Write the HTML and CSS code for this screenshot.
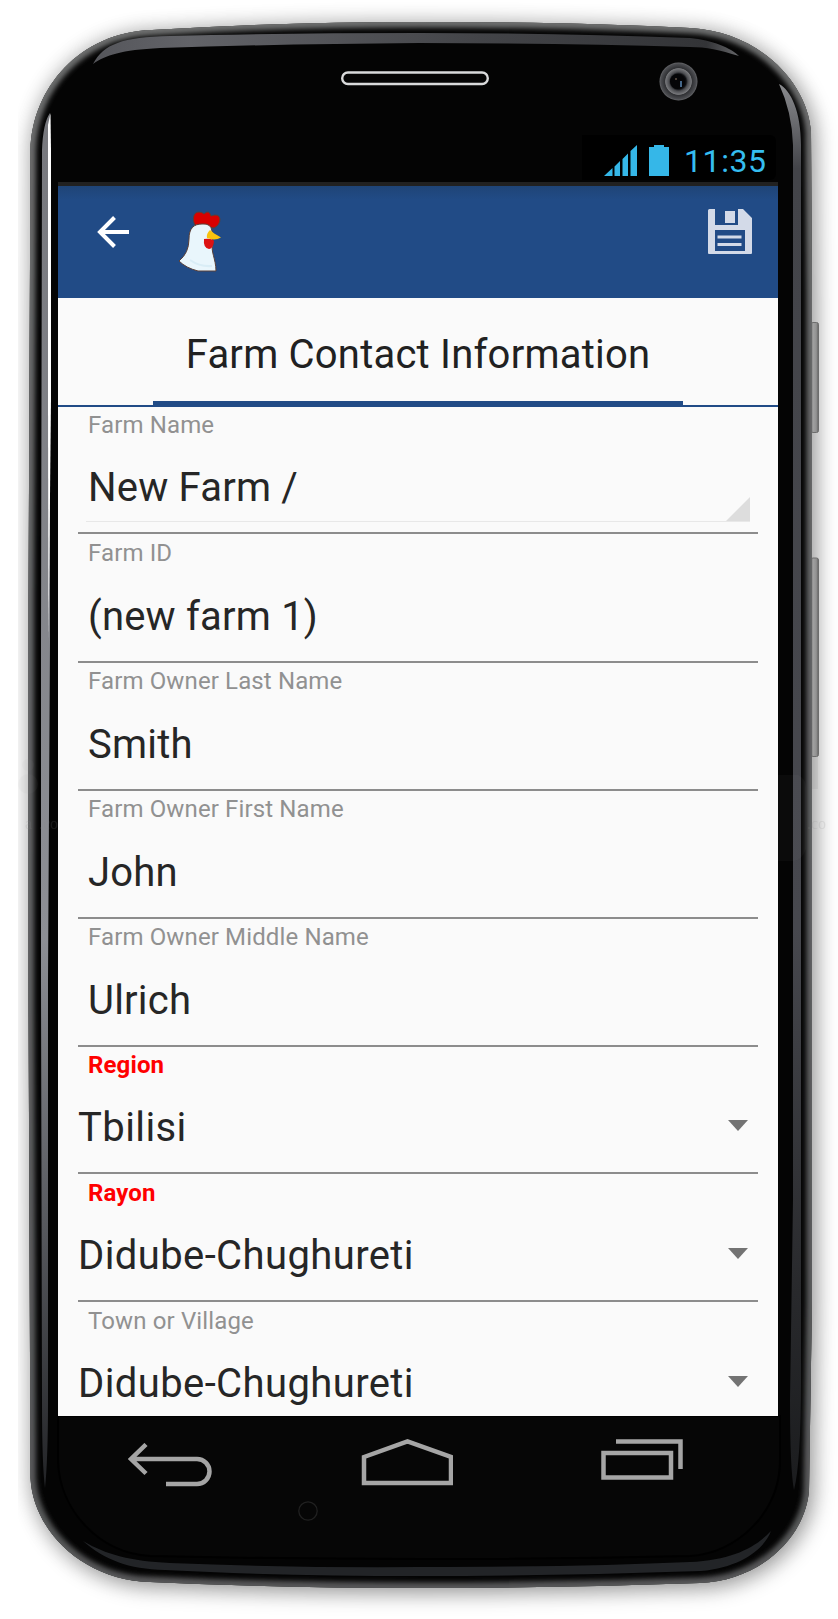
FILE: index.html
```html
<!DOCTYPE html>
<html lang="en">
<head>
<meta charset="utf-8">
<title>Farm Contact Information</title>
<link rel="stylesheet" href="styles.css">
</head>
<body>
<div class="phone">
  <svg class="frame" width="838" height="1619" viewBox="0 0 838 1619" aria-hidden="true">
    <defs>
      <filter id="soft" x="-10%" y="-10%" width="120%" height="120%"><feGaussianBlur stdDeviation="11"/></filter>
      <filter id="b3" x="-10%" y="-10%" width="120%" height="120%"><feGaussianBlur stdDeviation="2.6"/></filter>
      <clipPath id="sheet"><path d="M18 0H838V1619H18z"/></clipPath>
      <clipPath id="bodyClip"><use href="#body"/></clipPath>
      <linearGradient id="topGlow" x1="0" x2="1" y1="0" y2="0"><stop offset="0" stop-color="#55565b"/><stop offset=".15" stop-color="#626368"/><stop offset=".6" stop-color="#434448"/><stop offset=".95" stop-color="#333437"/><stop offset="1" stop-color="#66676a"/></linearGradient>
      <linearGradient id="leftGlow" x1="0" x2="0" y1="0" y2="1"><stop offset="0" stop-color="#77787d"/><stop offset=".6" stop-color="#8d8f95"/><stop offset=".82" stop-color="#54565b"/><stop offset="1" stop-color="#222326"/></linearGradient>
      <linearGradient id="rightGlow" x1="0" x2="0" y1="0" y2="1"><stop offset="0" stop-color="#8a8b8e"/><stop offset=".06" stop-color="#434449"/><stop offset=".6" stop-color="#47484e"/><stop offset=".85" stop-color="#292a2d"/><stop offset="1" stop-color="#1b1c1e"/></linearGradient>
      <linearGradient id="rim" x1="0" x2="0" y1="0" y2="1"><stop offset="0" stop-color="#6c6d6d"/><stop offset=".5" stop-color="#626365"/><stop offset="1" stop-color="#565758"/></linearGradient>
      <linearGradient id="btn" x1="0" x2="1" y1="0" y2="0"><stop offset="0" stop-color="#777"/><stop offset=".3" stop-color="#a0a0a0"/><stop offset=".7" stop-color="#929292"/><stop offset="1" stop-color="#606060"/></linearGradient>
      <radialGradient id="lens"><stop offset="0" stop-color="#020203"/><stop offset=".4" stop-color="#0c0d10"/><stop offset=".5" stop-color="#4b4c50"/><stop offset=".68" stop-color="#77787b"/><stop offset=".72" stop-color="#303134"/><stop offset=".92" stop-color="#4b4c50"/><stop offset="1" stop-color="#66676a"/></radialGradient>
      <path id="body" d="M30.500 150C32 88 80 32 152 30Q280 22 419 22Q570 22 690 28C762 32 808 85 811 132L812 300V1300L809 1490C806 1535 763 1580 700 1583Q560 1588 419 1588Q280 1588 150 1582C82 1580 33 1530 30.500 1478L28.500 1000V600z"/>
    </defs>
    <g clip-path="url(#sheet)">
      <use href="#body" fill="#000" opacity=".34" filter="url(#soft)" transform="translate(4 5)"/>
      <use href="#body" fill="#000" opacity=".16" filter="url(#soft)"/>
    </g>
    <rect x="811" y="322.500" width="7.500" height="110" rx="2" fill="url(#btn)" stroke="#6d6d6d"/>
    <rect x="811" y="558" width="7.500" height="198.500" rx="2" fill="url(#btn)" stroke="#6d6d6d"/>
    <path d="M812 757h6v32h-6z" fill="#888" opacity=".14"/>
    <use href="#body" fill="#040404"/>
    <g clip-path="url(#bodyClip)">
      <use href="#body" fill="none" stroke="url(#rim)" stroke-width="11" filter="url(#b3)"/>
      <use href="#body" fill="none" stroke="url(#rim)" stroke-width="1.500"/>
    </g>
    <path d="M93 64C104 44 122 37 170 36Q280 33 419 33Q560 33 690 38C712 40 731 48 739 56C719 50 707 47 690 47Q560 43 419 43Q280 44 160 48C121 50 106 55 93 64z" fill="url(#topGlow)"/>
    <path d="M42 150Q43 123 50 113V640L48 980V1400Q48 1460 45 1488Q42 1465 42 1400L41 980V640z" fill="url(#leftGlow)"/>
    <path d="M48 125L50.500 113L51 150V400L48.500 640L48 400z" fill="#fff"/>
    <path d="M779 84C791 90 801 112 801 145V1380Q801 1462 794 1490Q790 1470 790 1400L793 1200V145Q792 112 779 84z" fill="url(#rightGlow)"/>
    <path d="M83 1541C107 1555 130 1561 170 1563Q300 1568 419 1567Q580 1567 690 1562C733 1560 756 1547 771 1531C764 1549 742 1567 701 1571Q560 1576 419 1576Q280 1576 165 1570C128 1569 105 1560 83 1541z" fill="#222427"/>
    <path d="M58 1416V1460C59 1510 99 1553 150 1556Q419 1562 690 1556C738 1553 780 1512 780 1460V1416z" fill="#060606" stroke="#000" stroke-width="2"/>
    <rect x="342.200" y="72.500" width="145.600" height="11.500" rx="5.750" fill="#050505" stroke="#d9dadb" stroke-width="2.400"/>
    <circle cx="678.500" cy="81.500" r="19" fill="url(#lens)"/>
    <circle cx="677.500" cy="81.500" r="7.500" fill="#050507"/>
    <path d="M681 81v4M680 86h2" stroke="#5b88b5" stroke-width="1.500"/>
    <path d="M675 79h2" stroke="#8f7b68" stroke-width="1.200"/>
    <circle cx="308" cy="1511" r="9.200" fill="none" stroke="#202020" stroke-width="1.300"/>
    <g fill="#999" opacity=".05">
      <circle cx="28" cy="765" r="6"/><circle cx="28" cy="784" r="10"/>
      <path d="M778 775h20q8 4 8 12v62q-4 12-14 12h-14z"/>
    </g>
    <g class="ghost"><text x="25" y="829">a</text><text x="39" y="829">.co</text><text x="807" y="829">.co</text></g>
  </svg>

  <div class="device">
    <div class="statusbar">
      <div class="status">
        <svg width="66" height="32" viewBox="0 0 66 32" fill="#35b7e8">
          <path d="M0 31L8.500 23V31zM10.500 31V21.500L16 16V31zM18.500 31V14L24 8.500V31zM26.500 31V6L33 0V31z"/>
          <path d="M45 2H50V0H60V2H65V31H45z"/>
        </svg>
        <span class="clock">11:35</span>
      </div>
    </div>
    <main class="screen">
      <header class="appbar">
        <svg class="back" width="32" height="32" viewBox="0 0 32 32" fill="none" stroke="#fff" stroke-width="4"><path d="M32 16H3M17.500 1.500L3 16L17.500 30.500"/></svg>
        <svg class="hen" width="44" height="64" viewBox="0 0 44 64">
          <g stroke="#5b4038" stroke-width="1" stroke-linejoin="round">
            <path d="M17 15C14 10 15 2 21 2Q24 2 26 4Q31-1 33 6Q41 3 42 9Q42 15 36 18z" fill="#d80000"/>
            <path d="M11 29C11 18 16 14 24 14Q33 13 34 21L35 34C32 40 38 49 38 61H20Q8 58 1 51Q11 43 11 29z" fill="#e9f6fc"/>
          </g>
          <path d="M26 29Q34 28 36 31Q35 39 31 39Q25 38 26 29z" fill="#dc1212"/>
          <path d="M32 20Q35 23 43 27.500Q37 31 29 28Q28 24 32 20z" fill="#f8c20e"/>
          <path d="M12 50Q22 57 34 56" fill="none" stroke="#d9edf6" stroke-width="2"/>
        </svg>
        <svg class="save" width="44" height="46" viewBox="0 0 44 46"><path fill="#d3dae8" fill-rule="evenodd" d="M1.500 0H7V16H30V0H35L44 9V44Q44 45 43 45H1Q0 45 0 44V1.500Q0 0 1.500 0zM7 21V42H37V21z"/><path fill="#d3dae8" d="M17 2H27V14H17zM9.500 26.500H33.500V29.500H9.500zM9.500 34H33.500V37H9.500z"/></svg>
      </header>
      <div class="tabs"><h1 class="tab">Farm Contact Information</h1></div>
      <form class="form">
        <div class="row first"><label class="label">Farm Name</label><div class="value underlined">New Farm /<svg class="corner" width="24" height="24" viewBox="0 0 24 24"><path d="M24 0V24H0z" fill="#ddd"/></svg></div></div>
        <div class="row second"><label class="label">Farm ID</label><div class="value">(new farm 1)</div></div>
        <div class="row"><label class="label">Farm Owner Last Name</label><div class="value">Smith</div></div>
        <div class="row"><label class="label">Farm Owner First Name</label><div class="value">John</div></div>
        <div class="row"><label class="label">Farm Owner Middle Name</label><div class="value">Ulrich</div></div>
        <div class="row region"><label class="label required">Region</label><div class="value select">Tbilisi<i class="caret"></i></div></div>
        <div class="row lower"><label class="label required">Rayon</label><div class="value select">Didube-Chughureti<i class="caret"></i></div></div>
        <div class="row lower"><label class="label">Town or Village</label><div class="value select">Didube-Chughureti<i class="caret"></i></div></div>
      </form>
    </main>
    <nav class="navbar">
      <svg width="84" height="46" viewBox="0 0 84 46"><path d="M18 1.500L3 16L18 30.500M3 16H69A12.500 12.500 0 0 1 69 41H38"/></svg>
      <svg width="92" height="50" viewBox="0 0 92 50"><path d="M3 19L46.500 3.500L90 19V45H3z"/></svg>
      <svg width="82" height="42" viewBox="0 0 82 42"><path d="M2.500 14H70V38.500H2.500zM15 2.500H79.500V30"/></svg>
    </nav>
  </div>
</div>
</body>
</html>
```

FILE: styles.css
```css
* { box-sizing: border-box; }
body { margin: 0; background: #fff; font-family: Roboto, "Liberation Sans", sans-serif; }
svg { display: block; flex: none; }

.phone { position: relative; width: 838px; height: 1619px; overflow: hidden; }
.frame { position: absolute; inset: 0; }
.ghost { fill: #888; opacity: .16; font-family: "Liberation Serif", serif; font-size: 16px; }
.device { position: relative; width: 720px; margin-left: 58px; }

.statusbar { display: flex; height: 182px; padding: 135px 2px 2px 0; justify-content: flex-end; }
.status { display: flex; width: 194px; height: 45px; padding: 10px 0 0 22px; background: #000; border-radius: 0 6px 6px 0; }
.clock { margin-left: 14px; color: #35bdf0; font-size: 32px; line-height: 32px; letter-spacing: .6px; }

.screen { height: 1234px; overflow: hidden; background: #fafafa; border-top: 4px solid #212121; }
.appbar { display: flex; height: 112px; padding: 23px 26px 0 39px; background: linear-gradient(#1f4477, #214b86 14px); }
.back { margin-top: 7px; width: 32px; }
.hen { margin: 1px 0 0 49px; }
.save { margin-left: auto; }

.tabs { display: flex; height: 109px; justify-content: center; align-items: flex-end; border-bottom: 2px solid #214b86; }
.tab { width: 530px; height: 107px; margin: 0; padding-top: 33px; border-bottom: 4px solid #214b86; color: #212121; font-size: 40px; font-weight: 400; line-height: 47px; letter-spacing: .22px; text-align: center; white-space: nowrap; }

.form { padding: 0 20px; }
.row { height: 128px; padding-top: 4px; border-bottom: 2px solid #8c8c8c; }
.row.first, .row.region { height: 127px; }
.row.second { height: 129px; padding-top: 5px; }
.row.lower { padding-top: 5px; }
.label { display: block; padding-left: 10px; color: #919191; font-size: 24px; line-height: 28px; letter-spacing: .13px; }
.label.required { color: #f00; font-weight: 700; }
.value { display: flex; height: 60px; margin: 26px 8px 0; padding: 0 2px; color: #262626; font-size: 40px; line-height: 47px; letter-spacing: .2px; white-space: nowrap; }
.value.underlined { height: 58px; margin-top: 25px; border-bottom: 1px solid #e8e8e8; padding-right: 0; }
.value.select { padding: 0; margin: 25px 8px 0 0; letter-spacing: .4px; }
.corner { margin: 33px 0 0 auto; }
.caret { width: 20px; height: 11px; margin: 16px 2px 0 auto; background: #737373; clip-path: polygon(0 0, 100% 0, 50% 100%); }

.navbar { display: flex; padding: 22px 95px 0 70px; justify-content: space-between; }
.navbar svg { fill: none; stroke: #a5a5a5; stroke-width: 4.500px; }
.navbar svg:first-child { margin-top: 5px; }
.navbar svg:last-child { margin-top: 1px; }
```
